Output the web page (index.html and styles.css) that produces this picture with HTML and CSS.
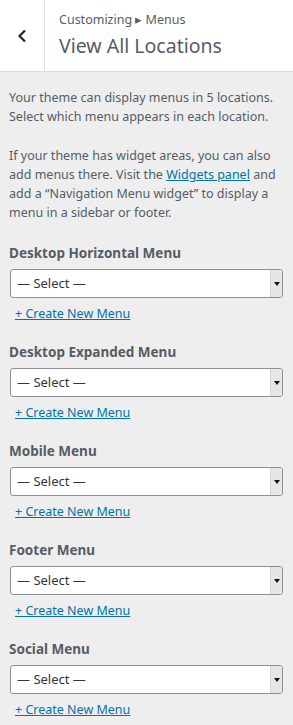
FILE: index.html
```html
<!DOCTYPE html>
<html lang="en">
  <head>
    <meta charset="UTF-8">
    <title>View All Locations</title>
    <link rel="stylesheet" href="styles.css">
  </head>
  <body>
    <div class="panel-header">
      <button class="back" aria-label="Back">
        <svg width="12" height="14" viewBox="0 0 12 14"><path d="M9 1.5 L3.5 7 L9 12.5" fill="none" stroke="#23282d" stroke-width="2.2"/></svg>
      </button>
      <div class="titles">
        <div class="crumb">Customizing &#9656; Menus</div>
        <h2>View All Locations</h2>
      </div>
    </div>

    <div class="panel-body">
      <p>Your theme can display menus in 5 locations. Select which menu appears in each location.</p>
      <p>If your theme has widget areas, you can also add menus there. Visit the <a href="#">Widgets panel</a> and add a &ldquo;Navigation Menu widget&rdquo; to display a menu in a sidebar or footer.</p>

      <div class="location">
        <label>Desktop Horizontal Menu</label>
        <div class="select"><span>&mdash; Select &mdash;</span><i></i></div>
        <a href="#" class="create">+ Create New Menu</a>
      </div>
      <div class="location">
        <label>Desktop Expanded Menu</label>
        <div class="select"><span>&mdash; Select &mdash;</span><i></i></div>
        <a href="#" class="create">+ Create New Menu</a>
      </div>
      <div class="location">
        <label>Mobile Menu</label>
        <div class="select"><span>&mdash; Select &mdash;</span><i></i></div>
        <a href="#" class="create">+ Create New Menu</a>
      </div>
      <div class="location">
        <label>Footer Menu</label>
        <div class="select"><span>&mdash; Select &mdash;</span><i></i></div>
        <a href="#" class="create">+ Create New Menu</a>
      </div>
      <div class="location">
        <label>Social Menu</label>
        <div class="select"><span>&mdash; Select &mdash;</span><i></i></div>
        <a href="#" class="create">+ Create New Menu</a>
      </div>
    </div>
  </body>
</html>
```

FILE: styles.css
```css
body {
  margin: 0;
  font-family: "Noto Sans", "Open Sans", sans-serif;
  background-color: #eeeeee;
  color: #555d66;
}
.panel-header {
  display: flex;
  height: 71px;
  background-color: white;
  border-bottom: 1px solid #dddddd;
}
.back {
  width: 45px;
  flex: none;
  border: none;
  border-right: 1px solid #dddddd;
  background: white;
  padding: 0;
  display: flex;
  align-items: center;
  justify-content: center;
}
.titles {
  padding: 11px 0 0 14px;
}
.crumb {
  font-size: 12.5px;
  line-height: 18px;
  color: #555d66;
}
.titles h2 {
  margin: 4px 0 0;
  font-size: 19.5px;
  font-weight: 400;
  line-height: 26px;
  color: #555d66;
}
.panel-body {
  padding: 16px 10px 0 9px;
}
.panel-body p {
  margin: 0 0 20px;
  font-size: 12.5px;
  line-height: 19px;
}
.panel-body p a {
  color: #0073aa;
}
.location {
  padding-top: 1px;
  margin-bottom: 18px;
}
.location label {
  display: block;
  font-size: 13.5px;
  font-weight: 700;
  line-height: 20px;
  margin-bottom: 6px;
}
.select {
  display: flex;
  align-items: stretch;
  height: 27px;
  border: 1px solid #8c8f94;
  border-radius: 3px;
  background-color: white;
  color: #32373c;
  font-size: 13px;
  overflow: hidden;
  margin-left: 1px;
}
.select span {
  flex: 1;
  padding-left: 6px;
  line-height: 27px;
}
.select i {
  width: 11px;
  background-color: #e6e6e6;
  border-left: 1px solid #d6d6d6;
  position: relative;
}
.select i::after {
  content: "";
  position: absolute;
  left: 3px;
  top: 12px;
  border-left: 3px solid transparent;
  border-right: 3px solid transparent;
  border-top: 4px solid #111;
}
.create {
  display: inline-block;
  margin: 7px 0 0 6px;
  font-size: 12.5px;
  line-height: 18px;
  color: #0073aa;
}
```
